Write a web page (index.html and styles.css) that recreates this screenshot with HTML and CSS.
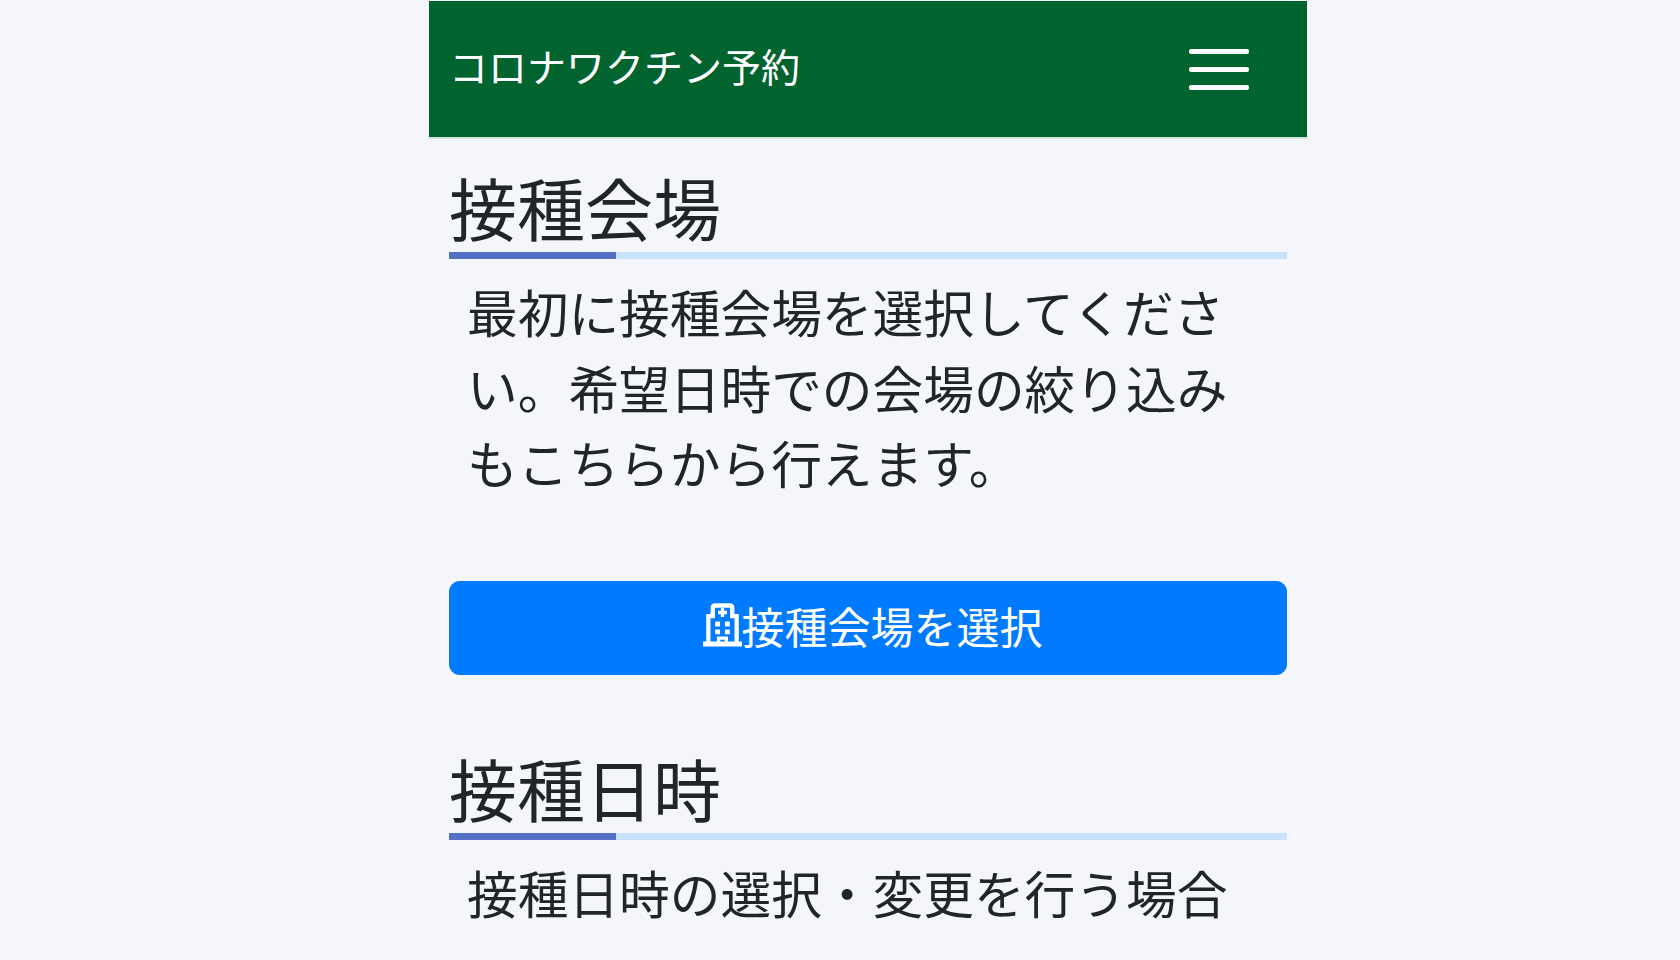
FILE: index.html
```html
<!DOCTYPE html>
<html lang="ja">
<head>
    <meta charset="UTF-8">
    <title>コロナワクチン予約</title>
    <link rel="stylesheet" href="styles.css">
</head>
<body>
    <div class="page">
        <header class="navbar">
            <div class="brand">コロナワクチン予約</div>
            <div class="toggler">
                <span></span>
                <span></span>
                <span></span>
            </div>
        </header>

        <main class="content">
            <h2 class="section-title">接種会場</h2>
            <p class="section-text">最初に接種会場を選択してください。希望日時での会場の絞り込みもこちらから行えます。</p>
            <button class="select-btn">
                <svg class="btn-icon" viewBox="0 0 40 44" fill="none" stroke="#fff">
                    <path d="M1 41.5H39" stroke-width="5" stroke-linecap="round"/>
                    <path d="M5.5 42V13H10V4.5Q10 2 12.5 2H27.5Q30 2 30 4.5V13H34.5V42" stroke-width="4.4"/>
                    <path d="M20 4.6V13.8M15.4 9.2H24.6" stroke-width="3.4"/>
                    <path d="M12.5 21H17.5M22.5 21H27.5M12.5 29H17.5M22.5 29H27.5" stroke-width="5"/>
                    <path d="M16 42V35.5H24V42" stroke-width="3.4"/>
                </svg>接種会場を選択
            </button>

            <h2 class="section-title">接種日時</h2>
            <p class="section-text">接種日時の選択・変更を行う場合</p>
        </main>
    </div>
</body>
</html>
```

FILE: styles.css
```css
* { margin: 0; padding: 0; box-sizing: border-box; }

html, body {
    height: 100%;
    overflow: hidden;
}

body {
    font-family: "Noto Sans CJK JP", "Noto Sans", sans-serif;
    background: #f4f6fb;
    color: #212529;
}

.page {
    width: 878px;
    margin-left: 429px;
    padding-top: 1px;
}

.navbar {
    height: 138px;
    margin-bottom: -1px;
    background: #01632e;
    border-bottom: 2px solid #d3e4da;
    display: flex;
    align-items: center;
    justify-content: space-between;
    padding: 0 58px 0 20px;
}

.brand {
    font-size: 39px;
    line-height: 1;
    color: #fff;
    margin-top: -8px;
}

.toggler {
    width: 60px;
    display: flex;
    flex-direction: column;
    gap: 13px;
}

.toggler span {
    display: block;
    height: 5px;
    background: #fff;
    border-radius: 2px;
}

.content {
    padding: 0 20px;
}

.section-title {
    font-size: 68px;
    font-weight: 400;
    line-height: 98px;
    padding-top: 20px;
    height: 121px;
    background:
        linear-gradient(#5470c6, #5470c6) left bottom / 167px 7px no-repeat,
        linear-gradient(#c9e2fb, #c9e2fb) left bottom / 100% 7px no-repeat;
}

.section-text {
    font-size: 50.7px;
    line-height: 75.6px;
    padding: 15px 50px 0 18px;
}

.select-btn {
    display: flex;
    align-items: center;
    justify-content: center;
    width: 100%;
    height: 94px;
    margin-top: 80px;
    margin-bottom: 44px;
    padding: 0 0 6px 9px;
    background: #007bff;
    color: #fff;
    border: none;
    border-radius: 11px;
    font-family: inherit;
    font-size: 43px;
}

.btn-icon {
    width: 39px;
    height: 44px;
}
```
